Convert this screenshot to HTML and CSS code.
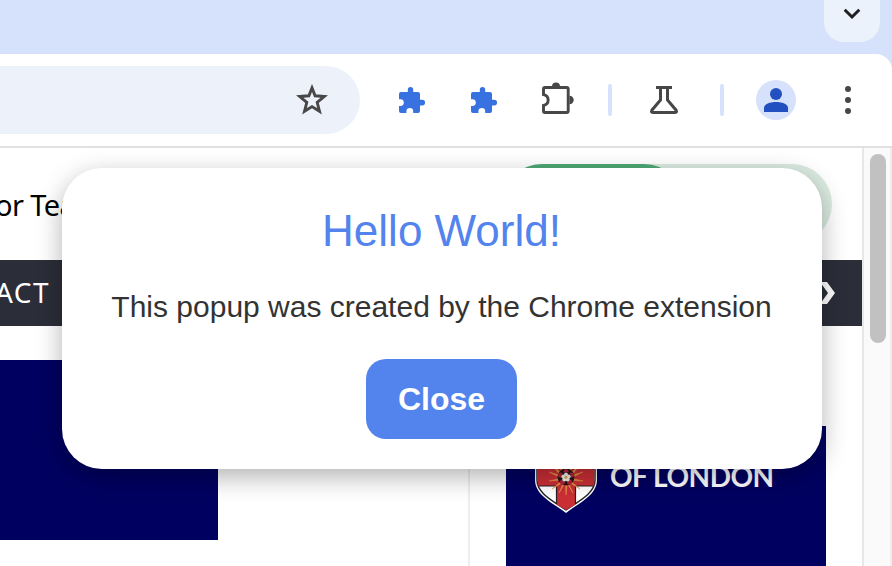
FILE: index.html
```html
<!DOCTYPE html>
<html lang="en">
<head>
<meta charset="utf-8">
<title>Hello World</title>
<link rel="stylesheet" href="styles.css">
</head>
<body>
<div class="tabstrip">
  <button class="tab-search" aria-label="Search tabs"><svg width="18" height="12" viewBox="0 0 18 12"><path d="M1.700 1.700 9 9l7.300-7.300" fill="none" stroke="#1f1f1f" stroke-width="3"/></svg></button>
</div>
<div class="toolbar-wrap">
<div class="toolbar">
  <div class="omnibox"><svg width="32" height="32" viewBox="0 0 32 32"><path d="M16 3.900l3.100 7.900 9.200.7-7.100 5.800 2.300 9L16 22.600l-7.500 4.700 2.300-9-7.100-5.800 9.200-.7z" fill="none" stroke="#474747" stroke-width="2.900"/></svg></div>
  <svg class="piece" width="28" height="28" viewBox="0 0 28 28"><use href="#puzzle"/></svg>
  <svg class="piece piece-second" width="28" height="28" viewBox="0 0 28 28"><path id="puzzle" d="M22 13.700V8q0-2-2-2h-4.800V3.700a2.700 2.700 0 0 0-5.400 0V6H3Q1 6 1 8v5.200h1.400a3.400 3.400 0 0 1 0 6.800H1v5q0 2 2 2h5.400v-1.500a3.400 3.400 0 0 1 6.800 0V27H20q2 0 2-2v-5.600h2.200a2.850 2.850 0 0 0 0-5.700z" fill="#3871e0"/></svg>
  <svg class="extensions" width="36" height="36" viewBox="0 0 36 36"><path d="M5 5.500h21.700q1.500 0 1.500 1.500v22q0 1.500-1.500 1.500H5q-1.500 0-1.500-1.500v-5.600c6.200-1.200 6.200-9.600 0-10.800V7q0-1.500 1.500-1.500z" fill="none" stroke="#474747" stroke-width="2.900"/><path d="M12 4.500a4 4 0 0 1 8 0zM29.500 13.800a4.200 4.200 0 0 1 0 8.400z" fill="#474747"/></svg>
  <span class="separator"></span>
  <svg class="flask" width="32" height="32" viewBox="0 0 32 32"><path d="M8 3.500h16M12.500 4v12L3.900 26.200q-1.200 2.300 1 2.300h22.200q2.200 0 1-2.300L19.500 16V4" fill="none" stroke="#474747" stroke-width="3"/></svg>
  <span class="separator separator-end"></span>
  <span class="avatar"><svg width="40" height="40" viewBox="0 0 40 40"><circle cx="20" cy="14" r="6" fill="#2350c1"/><path d="M8 32v-4c0-8 24-8 24 0v4z" fill="#2350c1"/></svg></span>
  <svg class="more" width="8" height="32" viewBox="0 0 8 32"><g fill="#474747"><circle cx="4" cy="5" r="3"/><circle cx="4" cy="16" r="3"/><circle cx="4" cy="27" r="3"/></g></svg>
</div>
</div>
<div class="viewport">
  <main class="site">
    <header class="site-header">
      <span class="strap">or Tea</span>
      <div class="switch"><div class="switch-on"></div></div>
    </header>
    <nav class="site-nav"><span class="nav-item">ACT</span><svg class="nav-next" width="18" height="24" viewBox="0 0 18 24"><path d="M2 1h7l8 11-8 11H2l8-11z" fill="#fff"/></svg></nav>
    <div class="columns">
      <div class="lead"><div class="picture"></div></div>
      <aside class="sponsor">
        <svg class="shield" width="64" height="76" viewBox="0 0 64 76">
          <path d="M1 0H63V42C63 58 43 66 32 75 21 66 1 58 1 42z" fill="#fff"/>
          <path d="M3 0H61V42C61 56 43 64 32 72 21 64 3 56 3 42z" fill="#fff" stroke="#222" stroke-width="1.400"/>
          <path d="M3.700 0H60.300V48H41.500V66.500L32 72l-9.500-5.500V48H3.700z" fill="#cb2f36"/>
          <path d="M4 48h18.500v18M60 48H41.500v18" fill="none" stroke="#2b2020" stroke-width="1.200"/>
          <path d="M32 39L30 22h4zM32 39l7-16-4 19zM32 39l13-11-10 13zM32 39l17-5-16 8zM32 39l17 4-18-1zM32 39l14 12-15-9zM32 39l7 16-9-15zM31 39l1 18 2-18zM32 39l-7 16 9-15zM32 39L18 51l15-9zM32 39l-17 4 18-1zM32 39l-17-5 16 8zM32 39L19 28l10 13zM32 39l-7-16 4 19z" fill="#e89548" stroke="#e89548" stroke-width=".5"/>
          <circle cx="32" cy="39" r="8.500" fill="#261519"/>
          <g fill="#b92337"><circle cx="32" cy="33.500" r="2.500"/><circle cx="26.500" cy="37" r="2.500"/><circle cx="37.500" cy="37" r="2.500"/><circle cx="28.500" cy="44" r="2.500"/><circle cx="35.500" cy="44" r="2.500"/></g>
          <circle cx="32" cy="39" r="5" fill="#261519"/>
          <g fill="#f5f0e8"><circle cx="32" cy="36.500" r="2"/><circle cx="29.300" cy="38.500" r="2"/><circle cx="34.700" cy="38.500" r="2"/><circle cx="30.300" cy="41.500" r="2"/><circle cx="33.700" cy="41.500" r="2"/></g><circle cx="32" cy="39.300" r="1.400" fill="#e6a14b"/>
        </svg>
        <span class="sponsor-name">OF LONDON</span>
      </aside>
    </div>
  </main>
  <div class="scrollbar"><div class="thumb"></div></div>
</div>
<section class="popup">
  <h1>Hello World!</h1>
  <p>This popup was created by the Chrome extension</p>
  <button class="close">Close</button>
</section>
</body>
</html>
```
FILE: styles.css
```css
* { box-sizing: border-box; }
body { margin: 0; width: 892px; height: 566px; overflow: hidden; background: #fff; font-family: "Liberation Sans", Arial, sans-serif; }
svg { display: block; flex: none; }
button { border: 0; padding: 0; }
.tabstrip { height: 54px; background: #d6e1fb; padding-right: 12px; display: flex; justify-content: flex-end; }
.tab-search { width: 56px; height: 42px; border-radius: 0 0 20px 20px; background: #ebf2fc; display: flex; justify-content: center; padding-top: 8px; }
.toolbar-wrap { background: #d6e1fb; height: 94px; }
.toolbar { height: 94px; background: #fff; border-bottom: 2px solid #e1e1e1; border-top-right-radius: 16px; display: flex; align-items: center; }
.omnibox { width: 360px; height: 68px; background: #edf2fa; border-radius: 0 34px 34px 0; display: flex; align-items: center; justify-content: flex-end; padding-right: 32px; }
.piece { margin-left: 38px; }
.piece-second { margin-left: 44px; }
.extensions { margin-left: 42px; }
.separator { width: 4px; height: 32px; border-radius: 2px; background: #d6e1fb; margin-left: 32px; }
.flask { margin-left: 36px; }
.separator-end { margin-left: 40px; }
.avatar { width: 40px; height: 40px; border-radius: 50%; background: #d6e1fb; margin-left: 32px; }
.more { margin-left: 48px; }
.viewport { height: 418px; display: flex; overflow: hidden; }
.site { width: 862px; background: #fff; }
.site-header { height: 112px; display: flex; justify-content: space-between; padding: 16px 30px 0 0; }
.strap { font: 29px/41px "Noto Sans", sans-serif; margin: 20px 0 0 -5px; letter-spacing: -.6px; }
.switch { width: 330px; height: 80px; border-radius: 40px; background: #dbebe1; }
.switch-on { width: 182px; height: 80px; border-radius: 40px; background: #4ea874; }
.site-nav { height: 66px; background: #2b2d38; color: #fff; display: flex; align-items: center; justify-content: space-between; padding-right: 26px; }
.nav-item { font: 28px/64px "Noto Sans", sans-serif; letter-spacing: 1.500px; margin: -2px 0 0 -5px; }
.columns { display: flex; height: 240px; }
.lead { width: 470px; border-right: 2px solid #eee; padding-top: 34px; }
.picture { width: 218px; height: 180px; background: #000061; }
.sponsor { width: 320px; height: 140px; margin: 100px 0 0 36px; background: #000061; display: flex; padding: 12px 0 0 28px; }
.sponsor-name { font: bold 28px/34px Lato, sans-serif; letter-spacing: -.5px; color: #fff; margin: 21px 0 0 12px; white-space: nowrap; }
.scrollbar { width: 30px; background: #fafafa; border-left: 2px solid #e7e7e7; border-right: 2px solid #eee; padding: 6px 0 0 6px; }
.thumb { width: 16px; height: 189px; border-radius: 8px; background: #c1c1c1; }
.popup { position: absolute; left: 62px; top: 168px; width: 760px; height: 301px; border-radius: 40px; background: #fff; box-shadow: 0 8px 26px rgba(0,0,0,.3); display: flex; flex-direction: column; align-items: center; padding: 37px 1px 0 0; clip-path: inset(-20px -60px -80px -60px); }
.popup h1 { margin: 0; font-size: 44px; line-height: 52px; font-weight: 400; color: #5383ec; }
.popup p { margin: 30px 0 0; font-size: 30px; line-height: 40px; color: #333; white-space: nowrap; }
.close { margin-top: 32px; width: 151px; height: 80px; border-radius: 20px; background: #5383ec; color: #fff; font: bold 32px/80px "Liberation Sans", Arial, sans-serif; }
```
